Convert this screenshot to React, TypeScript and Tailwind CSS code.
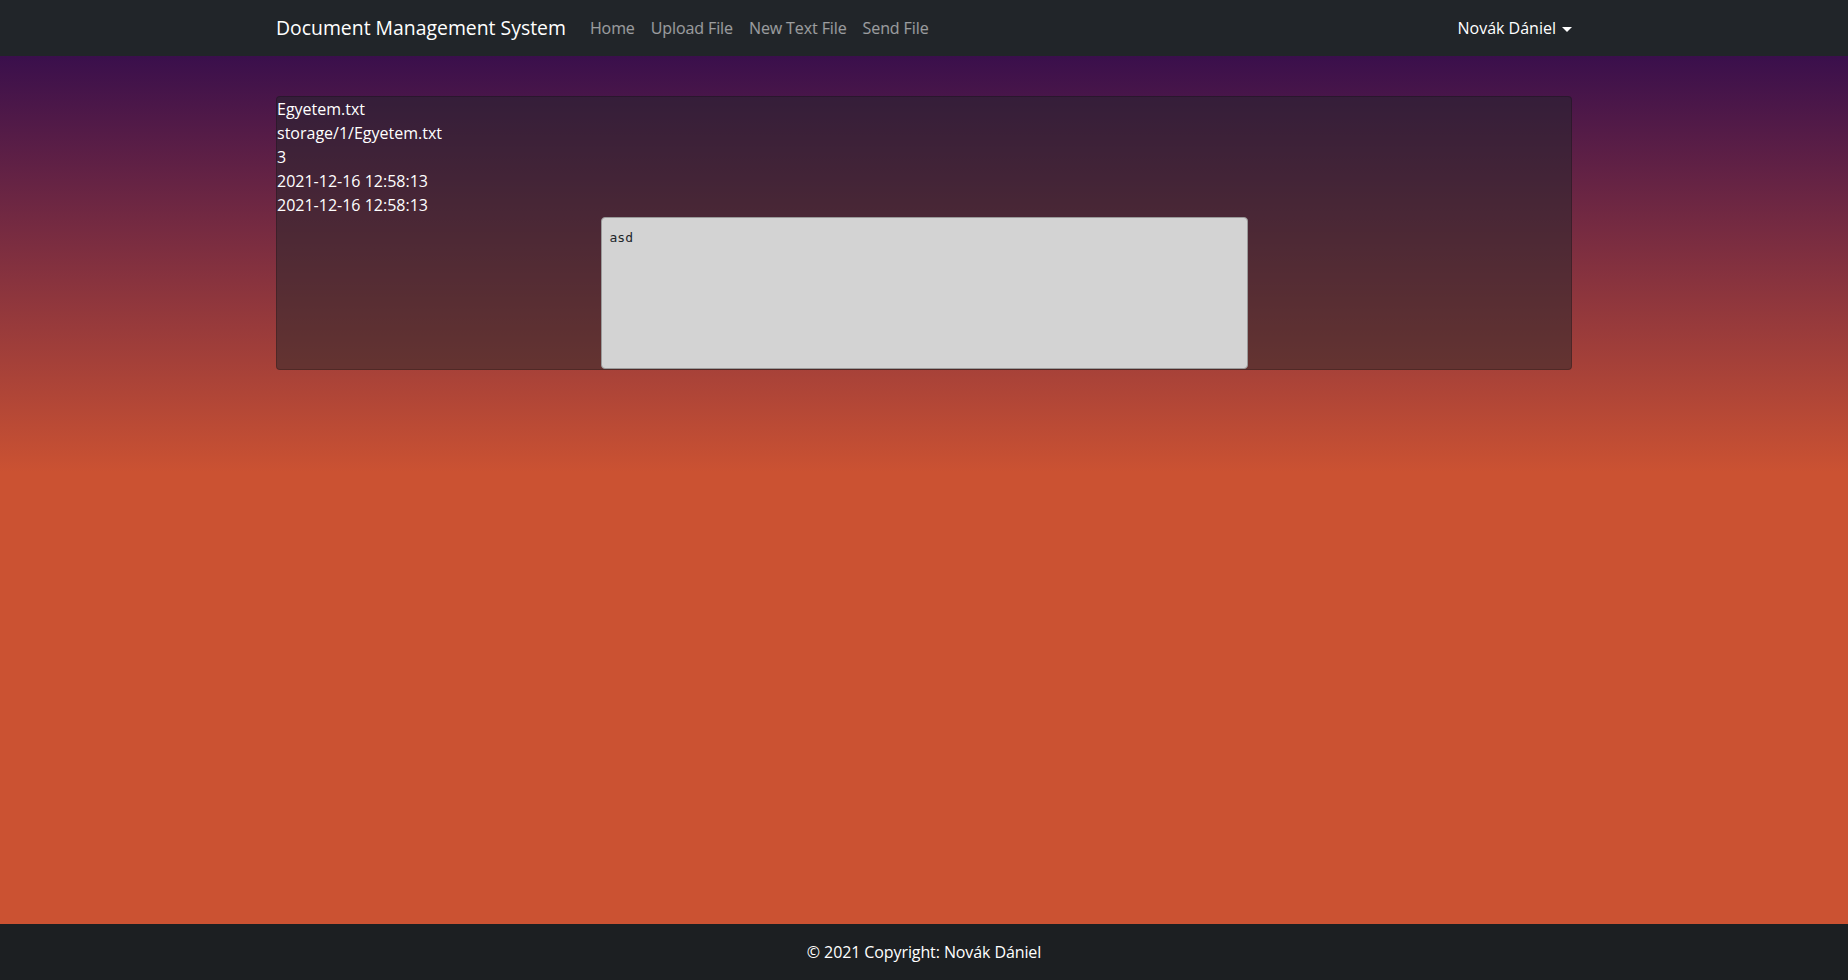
import React from 'react';

const navLinks = ['Home', 'Upload File', 'New Text File', 'Send File'];

const fileInfo = ['Egyetem.txt', 'storage/1/Egyetem.txt', '3', '2021-12-16 12:58:13', '2021-12-16 12:58:13'];

const App = () => {
  return (
    <div className="min-h-screen flex flex-col font-['Open_Sans',sans-serif] text-base text-white">
      {/* Navbar */}
      <nav className="bg-[#212529] h-[56px] shrink-0">
        <div className="max-w-[1320px] mx-auto px-3 h-full flex items-center">
          <a className="text-[19.4px] text-white mr-4 whitespace-nowrap">Document Management System</a>
          <ul className="flex items-center">
            {navLinks.map((link) => (
              <li key={link}>
                <a className="px-2 text-white/55 whitespace-nowrap tracking-[-0.1px]">{link}</a>
              </li>
            ))}
          </ul>
          <div className="ml-auto flex items-center">
            <span className="whitespace-nowrap">Novák Dániel</span>
            <span className="ml-[6px] mt-[2px] w-0 h-0 border-x-[5px] border-x-transparent border-t-[5px] border-t-white"></span>
          </div>
        </div>
      </nav>

      {/* Main */}
      <main className="flex-1 bg-[linear-gradient(180deg,#3a0f4c_0%,#cb5232_48%,#cb5232_100%)]">
        <div className="max-w-[1320px] mx-auto px-3 pt-[40px]">
          <div className="bg-[#212529]/50 border border-black/20 rounded-[4px] leading-6 flex flex-col">
            {fileInfo.map((line, i) => (
              <div key={i}>{line}</div>
            ))}
            <textarea
              readOnly
              defaultValue="asd"
              className="block w-1/2 mx-auto h-[152px] bg-[#d3d3d3] text-[#212529] border border-[#9a9a9a] rounded-[4px] pl-[8px] pt-[10px] font-['DejaVu_Sans_Mono',monospace] text-[13px] leading-[19px] resize-none outline-none"
            />
          </div>
        </div>
      </main>

      {/* Footer */}
      <footer className="bg-[#1c1f22] h-[56px] shrink-0 flex items-center justify-center">
        <span className="tracking-[-0.1px]">© 2021 Copyright: Novák Dániel</span>
      </footer>
    </div>
  );
};

export default App;
